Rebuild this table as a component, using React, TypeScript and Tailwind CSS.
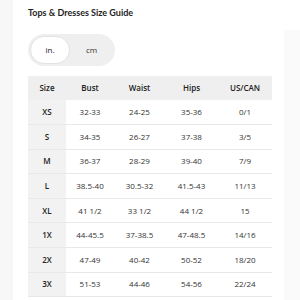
const rows = [
  ["XS", "32-33", "24-25", "35-36", "0/1"],
  ["S", "34-35", "26-27", "37-38", "3/5"],
  ["M", "36-37", "28-29", "39-40", "7/9"],
  ["L", "38.5-40", "30.5-32", "41.5-43", "11/13"],
  ["XL", "41 1/2", "33 1/2", "44 1/2", "15"],
  ["1X", "44-45.5", "37-38.5", "47-48.5", "14/16"],
  ["2X", "47-49", "40-42", "50-52", "18/20"],
  ["3X", "51-53", "44-46", "54-56", "22/24"],
];

const headers = ["Size", "Bust", "Waist", "Hips", "US/CAN"];
const widths = ["w-[38px]", "w-[48px]", "w-[51px]", "w-[53px]", "w-[54px]"];

export default function App() {
  return (
    <div className="w-[300px] h-[300px] overflow-hidden bg-white flex font-['Open_Sans',sans-serif] text-[#222]">
      <div className="w-[13px] bg-[#f7f7f7]" />
      <div className="flex-1 pl-[15px] pt-[5px]">
        <h1 className="font-['Lato',sans-serif] text-[9px] font-bold leading-[16px]">Tops &amp; Dresses Size Guide</h1>
        <div className="mt-[13px] w-[87px] h-[32px] rounded-full bg-[#efefef] flex items-center p-[2px]">
          <div className="w-[40px] h-[28px] rounded-full bg-white border border-[#e2e2e2] flex items-center justify-center text-[8px]">in.</div>
          <div className="flex-1 text-center text-[8px] text-[#333]">cm</div>
        </div>
        <table className="mt-[10px] border-collapse text-[8px] text-center">
          <thead>
            <tr className="bg-[#efefef] h-[24px]">
              {headers.map((h, i) => (
                <th key={h} className={`${widths[i]} font-semibold p-0`}>{h}</th>
              ))}
            </tr>
          </thead>
          <tbody>
            {rows.map((r) => (
              <tr key={r[0]} className="h-[24.6px] border-b border-[#e8e8e8]">
                {r.map((c, i) => (
                  <td key={i} className={i === 0 ? "bg-[#f2f2f2] font-semibold p-0" : "p-0 text-[#333]"}>{c}</td>
                ))}
              </tr>
            ))}
          </tbody>
        </table>
      </div>
      <div className="w-[16px] mt-[30px] bg-[#fafafa]" />
    </div>
  );
}
